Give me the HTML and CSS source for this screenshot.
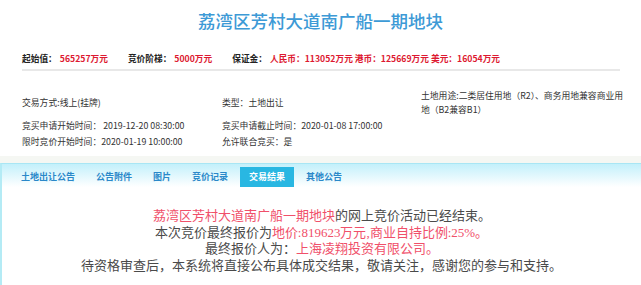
FILE: index.html
```html
<!DOCTYPE html>
<html lang="zh-CN">
<head>
    <meta charset="UTF-8">
    <title>荔湾区芳村大道南广船一期地块</title>
    <link rel="stylesheet" href="styles.css">
</head>
<body>
    <h1 class="title">荔湾区芳村大道南广船一期地块</h1>

    <div class="price-row">
        <span class="label">起始值：</span><span class="money">565257万元</span>
        <span class="label gap">竞价阶梯：</span><span class="money">5000万元</span>
        <span class="label gap">保证金：</span><span class="money">人民币：113052万元 港币：125669万元 美元：16054万元</span>
    </div>

    <div class="info">
        <div class="cell">交易方式:线上(挂牌)</div>
        <div class="cell">类型：土地出让</div>
        <div class="cell wrap">土地用途:二类居住用地（R2）、商务用地兼容商业用地（B2兼容B1）</div>
        <div class="cell">竞买申请开始时间： 2019-12-20 08:30:00</div>
        <div class="cell">竞买申请截止时间：2020-01-08 17:00:00</div>
        <div class="cell"></div>
        <div class="cell">限时竞价开始时间：2020-01-19 10:00:00</div>
        <div class="cell">允许联合竞买：是</div>
        <div class="cell"></div>
    </div>

    <div class="strip"></div>

    <div class="panel">
        <ul class="tabs">
            <li>土地出让公告</li>
            <li>公告附件</li>
            <li>图片</li>
            <li>竞价记录</li>
            <li class="active">交易结果</li>
            <li>其他公告</li>
        </ul>
        <div class="result">
            <p><span class="red">荔湾区芳村大道南广船一期地块</span>的网上竞价活动已经结束。</p>
            <p>本次竞价最终报价为<span class="red">地价:819623万元,商业自持比例:25%。</span></p>
            <p>最终报价人为：<span class="red">上海凌翔投资有限公司。</span></p>
            <p>待资格审查后，本系统将直接公布具体成交结果，敬请关注，感谢您的参与和支持。</p>
        </div>
    </div>
</body>
</html>
```

FILE: styles.css
```css
body {
    margin: 0;
    font-family: "Noto Sans CJK SC", sans-serif;
    background-color: #fff;
    color: #333;
}
.title {
    margin: 0;
    padding-top: 10px;
    line-height: 24px;
    font-size: 17.5px;
    font-weight: 500;
    text-align: center;
    color: #3d9ad6;
    font-family: "Liberation Serif", "Noto Sans CJK SC", serif;
}
.price-row {
    margin: 18px 21px 0 22px;
    padding-bottom: 3px;
    line-height: 14px;
    font-size: 8.7px;
    font-weight: bold;
    border-bottom: 2px solid #e8e8e8;
}
.label {
    color: #222;
}
.label.gap {
    margin-left: 18px;
}
.money {
    color: #dd1931;
    margin-left: 3px;
}
.info {
    display: grid;
    grid-template-columns: 200px 199px 206px;
    grid-template-rows: 30px 16px 16px;
    align-items: center;
    margin: 17px 0 6px 22px;
    font-size: 8.8px;
    color: #333;
}
.cell {
    line-height: 16px;
}
.cell.wrap {
    line-height: 14px;
}
.strip {
    height: 7px;
    background-color: #f5f7f3;
}
.panel {
    border-top: 1px solid #a9e6f4;
    border-left: 2px solid #b4ebf5;
    height: 122px;
}
.tabs {
    display: flex;
    align-items: flex-end;
    height: 23px;
    margin: 0;
    padding: 0 0 0 10px;
    list-style: none;
    background: linear-gradient(#c3f0fb, #ffffff);
}
.tabs li {
    height: 17px;
    padding: 3px 9px 0;
    margin-right: 3px;
    line-height: 14px;
    font-size: 9px;
    font-weight: bold;
    color: #2a88c9;
}
.tabs li.active {
    background-color: #29b7e2;
    color: #fff;
}
.result {
    padding-top: 21px;
    text-align: center;
    font-size: 13px;
    line-height: 16.7px;
    color: #4a4a4a;
    font-family: "Liberation Serif", serif;
}
.result p {
    margin: 0;
    white-space: nowrap;
}
.red {
    color: #f0506a;
}
```
